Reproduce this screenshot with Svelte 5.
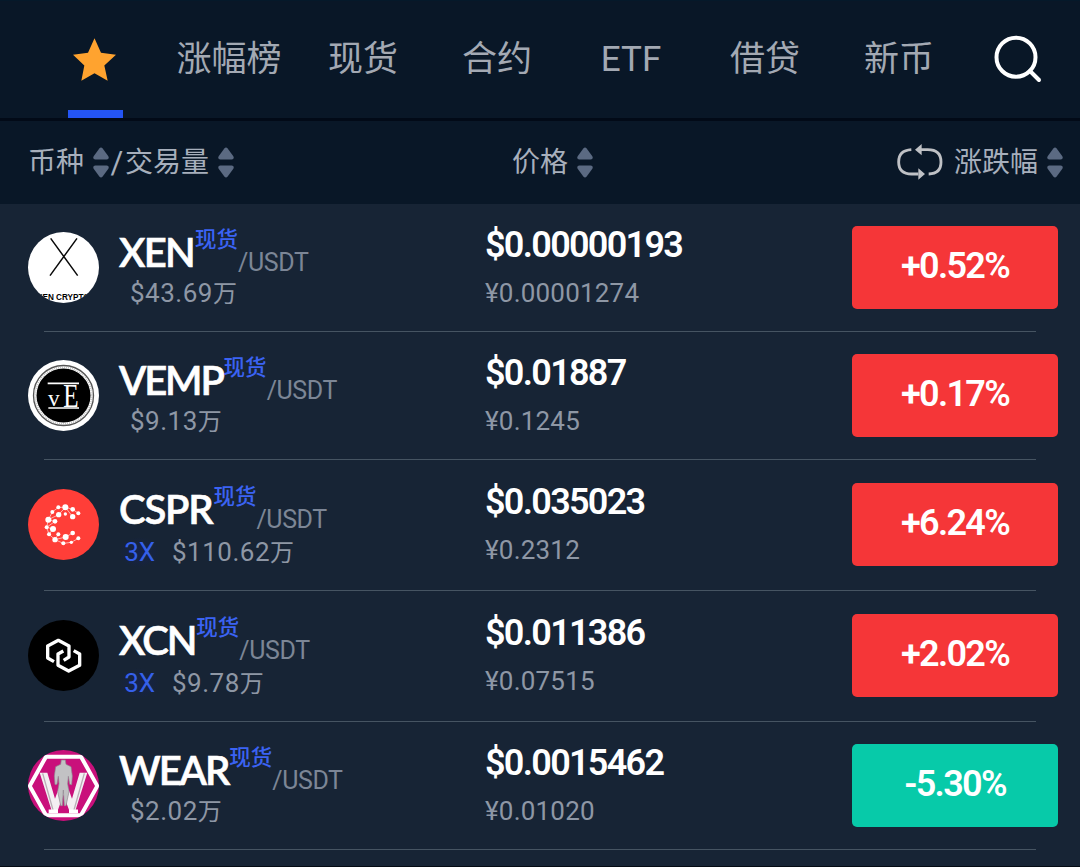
<script lang="ts">
  interface Coin {
    symbol: string;
    leverage?: string;
    volume: string;
    usd: string;
    cny: string;
    change: string;
  }

  const tabs = ['涨幅榜', '现货', '合约', 'ETF', '借贷', '新币'];

  const coins: Coin[] = [
    { symbol: 'XEN', volume: '$43.69', usd: '$0.00000193', cny: '¥0.00001274', change: '+0.52%' },
    { symbol: 'VEMP', volume: '$9.13', usd: '$0.01887', cny: '¥0.1245', change: '+0.17%' },
    { symbol: 'CSPR', leverage: '3X', volume: '$110.62', usd: '$0.035023', cny: '¥0.2312', change: '+6.24%' },
    { symbol: 'XCN', leverage: '3X', volume: '$9.78', usd: '$0.011386', cny: '¥0.07515', change: '+2.02%' },
    { symbol: 'WEAR', volume: '$2.02', usd: '$0.0015462', cny: '¥0.01020', change: '-5.30%' },
  ];

  // x, y, radius of the dots in the Casper logo
  const dots = [
    [91, 55, 6], [112, 55, 9], [134, 61, 7], [151, 73, 6], [134, 83, 8], [112, 75, 5], [92, 77, 8],
    [73, 69, 6], [61, 92, 9], [81, 97, 7], [56, 115, 6], [75, 120, 9], [63, 136, 6], [91, 136, 6],
    [81, 152, 8], [106, 163, 6], [113, 144, 9], [134, 132, 7], [130, 160, 5], [151, 148, 6],
  ];
</script>

{#snippet sorter()}
  <svg class="sorter" viewBox="0 0 48 92">
    <path d="M19 4q5-6 10 0l17 23q4 9-5 10H7q-9-1-5-10z" />
    <path d="M19 88q5 6 10 0l17-23q4-9-5-10H7q-9 1-5 10z" />
  </svg>
{/snippet}

{#snippet logo(symbol: string)}
  <svg class="logo" viewBox="0 0 213 213">
    <clipPath id="clip-{symbol}"><circle cx="106.5" cy="106.5" r="106.5" /></clipPath>
    <g clip-path="url(#clip-{symbol})">
      {#if symbol === 'XEN'}
        <rect width="213" height="213" fill="#fff" />
        <path d="M68 19L149 131M147 19L66 131" stroke="#0a0a0a" stroke-width="4.5" />
        <text x="106" y="203" class="xen-text" text-anchor="middle" textLength="158" lengthAdjust="spacingAndGlyphs">XEN CRYPTO</text>
      {:else if symbol === 'VEMP'}
        <rect width="213" height="213" fill="#fff" />
        <circle cx="106.5" cy="106.5" r="90" fill="none" stroke="#555" stroke-width="4" />
        <circle cx="106.5" cy="106.5" r="85" fill="none" stroke="#aaa" stroke-width="6" stroke-dasharray="2 4" />
        <circle cx="106.5" cy="106.5" r="81" fill="#000" />
        <path d="M59 70H153M61 144H153" stroke="#fff" stroke-width="5" />
        <text x="60" y="138" class="vemp-v" textLength="35" lengthAdjust="spacingAndGlyphs">v</text>
        <text x="106" y="141" class="vemp-e" textLength="46" lengthAdjust="spacingAndGlyphs">E</text>
      {:else if symbol === 'CSPR'}
        <rect width="213" height="213" fill="#ff3e38" />
        <path d="M151 73L134 61 112 55 91 55 73 69 61 92 56 115 63 136 81 152 106 163 130 160 151 148M134 83L112 55 92 77 61 92 81 97 56 115 75 120 63 136M91 136L81 152 113 144 134 132" fill="none" stroke="#ffc9c4" stroke-width="2.5" />
        {#each dots as [x, y, r]}
          <circle cx={x} cy={y} {r} fill="#fff" />
        {/each}
      {:else if symbol === 'XCN'}
        <rect width="213" height="213" fill="#000" />
        <g fill="none" stroke="#fff" stroke-width="10" stroke-linejoin="round">
          <path d="M78 125L59 114V78L91 61 123 78V111L107 121" />
          <path d="M106 93L90 102V136L122 153 155 136V102L137 92" />
        </g>
      {:else}
        <rect width="213" height="213" fill="#c9107b" />
        <path d="M5 108L54 20H159L208 108 159 196H54z" fill="none" stroke="#fff" stroke-width="12" />
        <path d="M35 68H58L81 146 98 100H115L132 146 155 68H178L142 182H124L106 134 89 182H71z" fill="#f3eff2" />
        <path d="M44 70L75 180M169 70L138 180" stroke="#b9aeb6" stroke-width="4" />
        <path d="M62 184H90M123 184H150" stroke="#fff" stroke-width="11" />
        <path d="M100 30h12l2 13 15 7 4 28-2 26-6-1-4-24-2 22 4 24-9 42h-5l-3-47-3 47h-5l-9-42 4-24-2-22-4 24-6 1-2-26 4-28 15-7z" fill="#c2c2c4" stroke="#8f8790" stroke-width="2" />
      {/if}
    </g>
  </svg>
{/snippet}

<main>
  <header>
    <nav>
      <div class="tab active">
        <svg class="star" viewBox="0 0 129 128">
          <path d="M64.500 0L84 44 129 50 94 82 104 128 64.500 105 25 128 34 82 0 50 45 44z" fill="#ffa32f" />
        </svg>
      </div>
      {#each tabs as tab}
        <div class="tab">{tab}</div>
      {/each}
    </nav>
    <svg class="search" viewBox="0 0 48 48">
      <circle cx="22" cy="22.200" r="19.500" />
      <path d="M36 36L45 45" stroke-linecap="round" />
    </svg>
  </header>

  <div class="columns">
    <div class="col-name">
      <span>币种</span>{@render sorter()}<span class="slash">/</span><span>交易量</span>{@render sorter()}
    </div>
    <div class="col-price"><span>价格</span>{@render sorter()}</div>
    <div class="col-change">
      <svg class="loop" viewBox="0 0 138 108">
        <g fill="none" stroke="#bfc1c5" stroke-width="8.500">
          <path d="M43 17Q5 19 5 54Q5 90 44 90H64" />
          <path d="M95 90Q132 89 132 54Q132 17 92 17H70" />
        </g>
        <path d="M54 17L74 0V34zM84 90L64 73V107z" fill="#bfc1c5" />
      </svg>
      <span>涨跌幅</span>{@render sorter()}
    </div>
  </div>

  {#each coins as coin}
    <div class="row" class:tall={coin.leverage}>
      {@render logo(coin.symbol)}
      <div class="info">
        <div class="pair">
          <span class="symbol {coin.symbol.toLowerCase()}">{coin.symbol}</span>
          <span class="tag">现货</span>
          <span class="quote">/USDT</span>
        </div>
        <div class="volume">
          {#if coin.leverage}
            <span class="leverage">{coin.leverage}</span>
          {/if}
          <span>{coin.volume}<span class="unit">万</span></span>
        </div>
      </div>
      <div class="price">
        <div class="usd">{coin.usd}</div>
        <div class="cny">{coin.cny}</div>
      </div>
      <div class="change" class:down={coin.change.startsWith('-')}>{coin.change}</div>
    </div>
  {/each}
</main>

<style>
  :global(body) {
    margin: 0;
    background: #172435;
  }

  main {
    box-sizing: border-box;
    width: 1080px;
    height: 867px;
    overflow: hidden;
    background: #172435;
    border-bottom: 1px solid #050b14;
    font-family: Roboto, "Noto Sans CJK SC", sans-serif;
  }

  svg {
    display: block;
    flex-shrink: 0;
  }

  /* Tabs */
  header {
    box-sizing: border-box;
    display: flex;
    height: 121px;
    padding-left: 28px;
    background: #091727;
    border-top: 1px solid #05192a;
    border-bottom: 3px solid #020a17;
  }

  nav {
    display: grid;
    grid-template-columns: repeat(7, 134px);
  }

  .tab {
    height: 117px;
    color: #a3a9b3;
    font-size: 35px;
    line-height: 118px;
    text-align: center;
  }

  .active {
    box-sizing: border-box;
    width: 55px;
    margin: 0 auto;
    padding-top: 37px;
    border-bottom: 8px solid #2455f5;
  }

  .star {
    width: 43px;
    height: 43px;
    margin: 0 auto 0 5px;
  }

  .search {
    width: 48px;
    height: 48px;
    margin: 34px 0 0 28px;
    fill: none;
    stroke: #fff;
    stroke-width: 4;
  }

  /* Column titles */
  .columns {
    display: flex;
    box-sizing: border-box;
    height: 83px;
    padding: 0 17px 0 28px;
    background: #091727;
    color: #a7afbc;
    font-size: 28px;
    line-height: 82px;
  }

  .columns > div {
    display: flex;
    align-items: center;
  }

  .col-name {
    width: 484px;
  }

  .col-price {
    flex-grow: 1;
  }

  .slash {
    width: 16px;
    font-size: 31px;
    text-align: center;
  }

  .sorter {
    width: 16px;
    height: 31px;
    margin-left: 9px;
    fill: #5b6a82;
  }

  .loop {
    width: 46px;
    height: 36px;
    margin: -2px 11px 0 0;
  }

  /* Coin rows */
  .row {
    display: flex;
    align-items: center;
    height: 127px;
    padding: 0 22px 1px 28px;
    background: linear-gradient(#465462, #465462) 44px 100% / 992px 1px no-repeat;
  }

  .tall {
    height: 128px;
    padding-bottom: 3px;
  }

  .logo {
    width: 71px;
    height: 71px;
    margin-right: 20px;
  }

  .xen-text {
    font: bold 29px "Liberation Sans", sans-serif;
  }

  .vemp-v {
    fill: #fff;
    font: 72px "Liberation Serif", serif;
  }

  .vemp-e {
    fill: #fff;
    font: 102px "Liberation Serif", serif;
  }

  .info {
    width: 366px;
    padding-top: 3px;
  }

  .pair {
    display: flex;
    height: 44px;
  }

  .symbol {
    color: #fff;
    font-family: Lato, sans-serif;
    font-size: 40px;
    font-weight: 600;
    line-height: 46px;
    letter-spacing: -1.7px;
    -webkit-text-stroke: 0.6px #fff;
  }

  .vemp {
    letter-spacing: -2.2px;
  }

  .cspr {
    letter-spacing: -1.2px;
  }

  .xcn,
  .wear {
    letter-spacing: -2.1px;
  }

  .tag {
    margin-left: 1px;
    color: #3b63f3;
    font-size: 21.5px;
    font-weight: 500;
    line-height: 22px;
  }

  .quote {
    height: 38px;
    margin-top: 6px;
    color: #7c8696;
    font-size: 25px;
    font-weight: 400;
    line-height: 55px;
    letter-spacing: -0.4px;
  }

  .volume {
    display: flex;
    margin-top: 5px;
    padding-left: 11px;
    color: #8e97a5;
    font-size: 26px;
    line-height: 30px;
    letter-spacing: 0.5px;
  }

  .tall .volume {
    margin-top: 7px;
    margin-bottom: -2px;
    padding-left: 0;
  }

  .leverage {
    width: 41px;
    margin-right: 12px;
    background: radial-gradient(closest-side, #15224c, #172435);
    color: #3560ea;
    text-align: center;
    letter-spacing: -0.3px;
  }

  .unit {
    font-size: 24px;
  }

  .price {
    flex-grow: 1;
    margin-top: -1px;
  }

  .usd {
    color: #fff;
    font-size: 36px;
    font-weight: 600;
    line-height: 40px;
    letter-spacing: -1.7px;
  }

  .cny {
    margin-top: 12px;
    color: #8e97a5;
    font-size: 26px;
    line-height: 32px;
    letter-spacing: 0.2px;
  }

  .change {
    width: 206px;
    height: 83px;
    border-radius: 5px;
    background: #f53638;
    color: #fff;
    font-size: 36px;
    font-weight: 600;
    line-height: 80px;
    letter-spacing: -1.7px;
    text-align: center;
  }

  .down {
    background: #07caa9;
  }
</style>
